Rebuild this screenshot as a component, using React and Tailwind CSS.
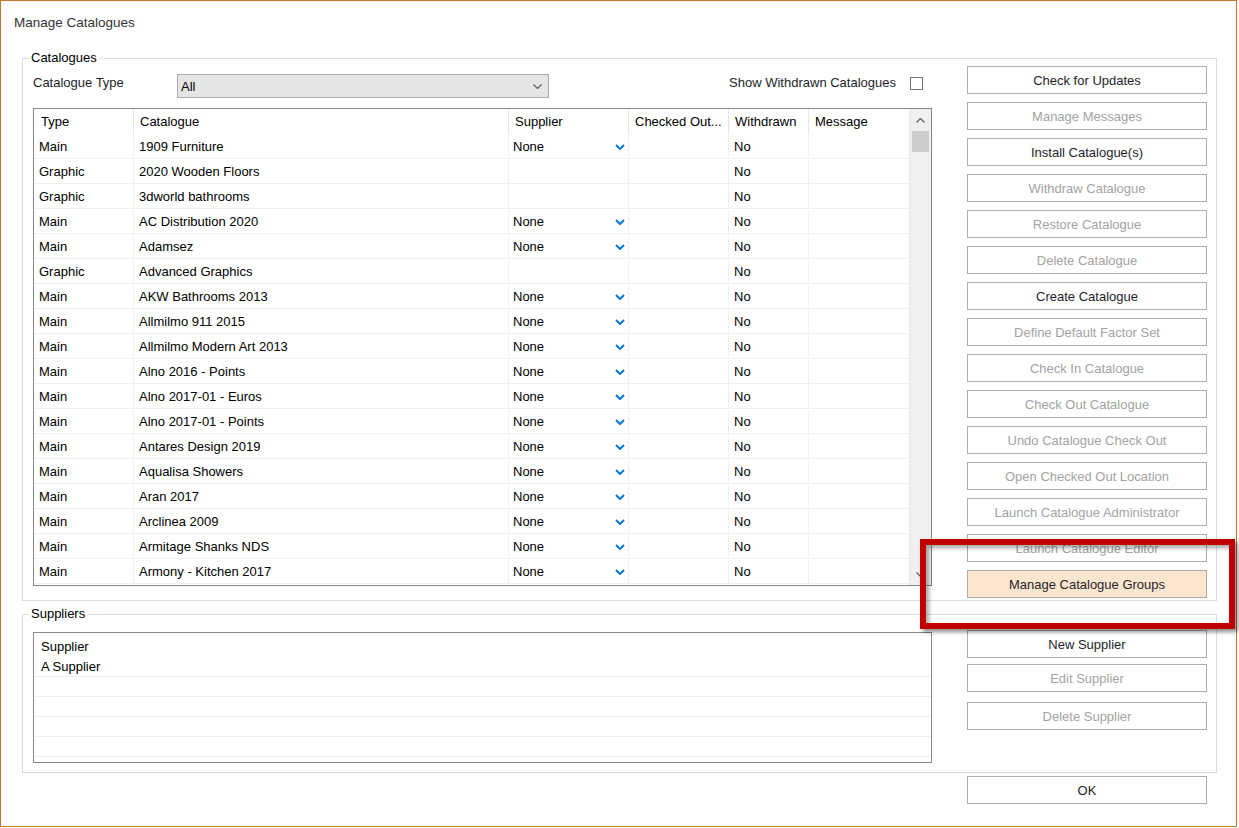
import React from 'react';

const rows = [
    ['Main', '1909 Furniture', true],
    ['Graphic', '2020 Wooden Floors', false],
    ['Graphic', '3dworld bathrooms', false],
    ['Main', 'AC Distribution 2020', true],
    ['Main', 'Adamsez', true],
    ['Graphic', 'Advanced Graphics', false],
    ['Main', 'AKW Bathrooms 2013', true],
    ['Main', 'Allmilmo 911 2015', true],
    ['Main', 'Allmilmo Modern Art 2013', true],
    ['Main', 'Alno 2016 - Points', true],
    ['Main', 'Alno 2017-01 - Euros', true],
    ['Main', 'Alno 2017-01 - Points', true],
    ['Main', 'Antares Design 2019', true],
    ['Main', 'Aqualisa Showers', true],
    ['Main', 'Aran 2017', true],
    ['Main', 'Arclinea 2009', true],
    ['Main', 'Armitage Shanks NDS', true],
    ['Main', 'Armony - Kitchen 2017', true],
];

const actions = [
    ['Check for Updates', true],
    ['Manage Messages', false],
    ['Install Catalogue(s)', true],
    ['Withdraw Catalogue', false],
    ['Restore Catalogue', false],
    ['Delete Catalogue', false],
    ['Create Catalogue', true],
    ['Define Default Factor Set', false],
    ['Check In Catalogue', false],
    ['Check Out Catalogue', false],
    ['Undo Catalogue Check Out', false],
    ['Open Checked Out Location', false],
    ['Launch Catalogue Administrator', false],
    ['Launch Catalogue Editor', false],
];

function Button({ label, enabled = true, highlight = false, className = '' }) {
    return (
        <button
            className={`w-[240px] h-[28px] border border-[#adadad] text-[13px] leading-none flex items-center justify-center ${
                highlight ? 'bg-[#fde6cf]' : 'bg-white'
            } ${enabled ? 'text-[#1e1e2a]' : 'text-[#a3a3a3]'} ${className}`}
        >
            {label}
        </button>
    );
}

function BlueChevron() {
    return (
        <svg width="10" height="6" viewBox="0 0 10 6" className="mr-[3px]">
            <polyline points="1,1 5,5 9,1" fill="none" stroke="#0078d7" strokeWidth="2" />
        </svg>
    );
}

function SmallChevron({ up }) {
    return (
        <svg width="9" height="5" viewBox="0 0 9 5">
            <polyline
                points={up ? '0.5,4.5 4.5,0.5 8.5,4.5' : '0.5,0.5 4.5,4.5 8.5,0.5'}
                fill="none"
                stroke="#606060"
                strokeWidth="1.2"
            />
        </svg>
    );
}

const cols = 'grid grid-cols-[100px_375px_120px_100px_80px_100px]';

export default function App() {
    return (
        <div className="bg-white font-['Liberation_Sans',Arial,sans-serif] text-black">
            <div className="relative w-[1237px] h-[827px] border border-[#c4772a] bg-white">
                {/* Title */}
                <div className="pt-[14px] pl-[13px] text-[13.5px] leading-[16px] text-[#333]">Manage Catalogues</div>

                {/* Catalogues group */}
                <div className="relative mt-[27px] ml-[21px] w-[1195px] h-[543px] border border-[#dcdcdc] flex pl-[10px] pr-[9px]">
                    <span className="absolute left-[6px] -top-[9px] px-[2px] bg-white text-[13px] leading-[16px]">Catalogues</span>

                    <div className="w-[899px] pt-[15px] flex flex-col">
                        <div className="flex items-start h-[24px] text-[13px] leading-[16px] text-[#1e1e2a]">
                            <span className="w-[144px] pt-[1px]">Catalogue Type</span>
                            <div className="w-[372px] h-[24px] bg-[#e5e5e5] border border-[#acacac] flex items-center justify-between pl-[3px] pr-[6px] text-black">
                                <span className="mt-[2px]">All</span>
                                <SmallChevron />
                            </div>
                            <div className="flex-1" />
                            <span className="pt-[1px]">Show Withdrawn Catalogues</span>
                            <div className="ml-[14px] mr-[9px] mt-[3px] w-[13px] h-[13px] border border-[#777] bg-white" />
                        </div>

                        <div className="mt-[10px] h-[478px] border border-[#828790] flex overflow-hidden text-[13px]">
                            <div className="w-[875px]">
                                <div className={`${cols} h-[25px] items-center`}>
                                    {['Type', 'Catalogue', 'Supplier', 'Checked Out...', 'Withdrawn', 'Message'].map((h, i) => (
                                        <div
                                            key={h}
                                            className={`h-full flex items-center pt-[1px] px-[6px] border-[#e5e5e5] ${i < 5 ? 'border-r' : ''} ${i === 0 ? 'pl-[7px]' : ''}`}
                                        >
                                            {h}
                                        </div>
                                    ))}
                                </div>
                                {rows.map(([type, name, sup]) => (
                                    <div key={name} className={`${cols} h-[25px] pt-[1px] border-b border-[#f0f0f0]`}>
                                        <div className="flex items-center pl-[5px] border-r border-[#f0f0f0]">{type}</div>
                                        <div className="flex items-center pl-[5px] border-r border-[#f0f0f0]">{name}</div>
                                        <div className="flex items-center justify-between pl-[4px] border-r border-[#f0f0f0]">
                                            {sup && (
                                                <>
                                                    <span>None</span>
                                                    <BlueChevron />
                                                </>
                                            )}
                                        </div>
                                        <div className="border-r border-[#f0f0f0]" />
                                        <div className="flex items-center pl-[5px] border-r border-[#f0f0f0]">No</div>
                                        <div />
                                    </div>
                                ))}
                            </div>
                            <div className="w-[22px] bg-[#f0f0f0] flex flex-col items-center border-l border-[#e8e8e8]">
                                <div className="h-[22px] flex items-center justify-center">
                                    <SmallChevron up />
                                </div>
                                <div className="w-[17px] h-[21px] bg-[#cdcdcd]" />
                                <div className="flex-1" />
                                <div className="h-[22px] flex items-center justify-center">
                                    <SmallChevron />
                                </div>
                            </div>
                        </div>
                    </div>

                    <div className="ml-[35px] pt-[7px] flex flex-col gap-[8px]">
                        {actions.map(([label, enabled]) => (
                            <Button key={label} label={label} enabled={enabled} />
                        ))}
                        <Button label="Manage Catalogue Groups" highlight />
                    </div>
                </div>

                {/* Suppliers group */}
                <div className="relative mt-[13px] ml-[21px] w-[1195px] h-[159px] border border-[#dcdcdc] flex items-start pl-[10px] pr-[9px] pt-[15px]">
                    <span className="absolute left-[6px] -top-[9px] px-[2px] bg-white text-[13px] leading-[16px]">Suppliers</span>

                    <div className="mt-[2px] w-[899px] h-[131px] border border-[#828790] text-[13px] leading-[16px] overflow-hidden">
                        <div className="h-[24px] pt-[6px] pl-[7px]">Supplier</div>
                        <div className="h-[20px] pt-[2px] pl-[7px] border-b border-[#f0f0f0]">A Supplier</div>
                        {[0, 1, 2, 3].map((i) => (
                            <div key={i} className="h-[20px] ml-[1px] border-b border-[#f0f0f0]" />
                        ))}
                    </div>

                    <div className="ml-[35px] flex flex-col">
                        <Button label="New Supplier" />
                        <Button label="Edit Supplier" enabled={false} className="mt-[6px]" />
                        <Button label="Delete Supplier" enabled={false} className="mt-[10px]" />
                    </div>
                </div>

                <div className="mt-[3px] ml-[966px]">
                    <Button label="OK" />
                </div>

                {/* Annotation highlight */}
                <div className="absolute left-[919px] top-[538px] w-[315px] h-[90px] border-[6px] border-[#c00000] shadow-[3px_3px_4px_rgba(0,0,0,0.45),inset_3px_3px_4px_rgba(0,0,0,0.35)]" />
            </div>
        </div>
    );
}
